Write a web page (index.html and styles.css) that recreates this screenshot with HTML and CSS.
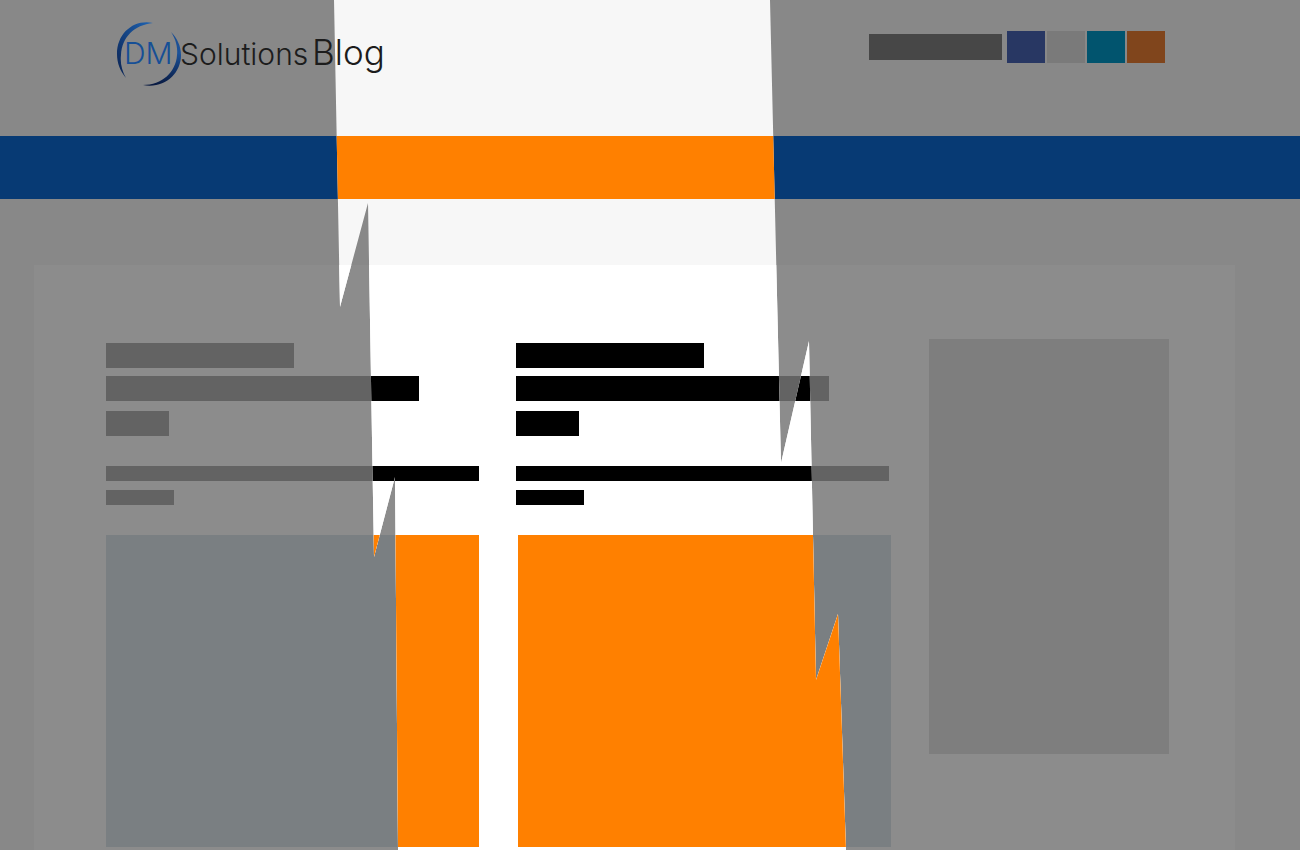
FILE: index.html
```html
<!DOCTYPE html>
<html lang="de">
<head>
	<meta charset="utf-8">
	<link rel="stylesheet" href="styles.css">
</head>
<body>
	<div class="stage">

		<!-- dimmed page -->
		<div class="page">
			<header class="header">
				<svg class="logo" width="290" height="68" viewBox="0 0 290 68">
					<defs>
						<linearGradient id="arcLeft" x1="1" y1="0" x2="0" y2="1">
							<stop offset="0" stop-color="#2065b4"></stop>
							<stop offset="1" stop-color="#09204f"></stop>
						</linearGradient>
						<linearGradient id="arcRight" x1="0" y1="0" x2="0" y2="1">
							<stop offset="0" stop-color="#1d4f92"></stop>
							<stop offset="0.4" stop-color="#1b5299"></stop>
							<stop offset="1" stop-color="#08183f"></stop>
						</linearGradient>
					</defs>
					<path fill="url(#arcLeft)" d="M41 3C22-1 5 13 5 34C5 43 8 51 14 58C10 51 8 43 9 35C10 17 22 5 41 3Z"></path>
					<path fill="url(#arcRight)" d="M59 12C65 18 69 26 69 35C69 54 52 69 31 65C50 65 64 52 65 35C66 26 63 18 59 12Z"></path>
					<text class="logo-dm" x="12" y="44">DM</text>
					<text class="logo-solutions" x="68" y="45">Solutions</text>
					<text class="logo-blog" x="200" y="45">Blog</text>
				</svg>
				<div class="share">
					<div class="share-label"></div>
					<div class="share-box facebook"></div>
					<div class="share-box mail"></div>
					<div class="share-box twitter"></div>
					<div class="share-box rss"></div>
				</div>
			</header>
			<div class="nav"></div>
			<div class="panel">
				<div class="main">
					<div class="teasers">
						<div class="teaser">
							<div class="title"></div>
							<div class="title long"></div>
							<div class="title short"></div>
							<div class="line"></div>
							<div class="line short"></div>
						</div>
						<div class="teaser">
							<div class="title"></div>
							<div class="title long"></div>
							<div class="title short"></div>
							<div class="line"></div>
							<div class="line short"></div>
						</div>
					</div>
					<div class="images">
						<div class="image"></div>
						<div class="image"></div>
					</div>
				</div>
				<div class="sidebar"></div>
			</div>
		</div>

		<!-- same page in full colour, only visible inside the jagged strip -->
		<div class="page lit">
			<div class="header"></div>
			<div class="nav"></div>
			<div class="panel">
				<div class="main">
					<div class="teasers">
						<div class="teaser">
							<div class="title"></div>
							<div class="title long"></div>
							<div class="title short"></div>
							<div class="line"></div>
							<div class="line short"></div>
						</div>
						<div class="teaser">
							<div class="title"></div>
							<div class="title long"></div>
							<div class="title short"></div>
							<div class="line"></div>
							<div class="line short"></div>
						</div>
					</div>
					<div class="images">
						<div class="image"></div>
						<div class="image"></div>
					</div>
				</div>
				<div class="sidebar"></div>
			</div>
		</div>

	</div>
</body>
</html>
```

FILE: styles.css
```css
* {
	box-sizing: border-box;
}
body {
	margin: 0;
	background: #888888;
	font-family: "Inter", "Liberation Sans", sans-serif;
}
.stage {
	position: relative;
}
.page {
	display: flex;
	flex-direction: column;
	min-height: 100vh;
	background: #888888;
}

/* header */
.header {
	display: flex;
	justify-content: space-between;
	align-items: flex-start;
	height: 136px;
	padding: 20px 135px 0 112px;
}
.logo {
	position: relative;
	z-index: 1;
}
.logo-dm {
	font-size: 30px;
	font-weight: 300;
	fill: #164f96;
}
.logo-solutions {
	font-size: 30px;
	font-weight: 300;
	fill: #1c1c1c;
}
.logo-blog {
	font-size: 35px;
	font-weight: 300;
	fill: #1c1c1c;
}
.share {
	display: flex;
	align-items: center;
	gap: 2px;
	margin-top: 11px;
}
.share-label {
	width: 133px;
	height: 26px;
	margin-right: 3px;
	background: #474747;
}
.share-box {
	width: 38px;
	height: 32px;
}
.facebook {
	background: #283763;
}
.mail {
	background: #7a7a7a;
}
.twitter {
	background: #01546e;
}
.rss {
	background: #80451c;
}

.nav {
	height: 63px;
	background: #073a74;
}

/* content */
.panel {
	display: flex;
	flex: 1;
	align-items: flex-start;
	gap: 40px;
	margin: 66px 65px 0 34px;
	padding: 74px 66px 3px 72px;
	background: #8c8c8c;
}
.main {
	flex: 1;
	padding-top: 4px;
}
.teasers {
	display: grid;
	grid-template-columns: 1fr 1fr;
	gap: 37px;
}
.title {
	width: 188px;
	height: 25px;
	background: #636363;
}
.title.long {
	width: 313px;
	max-width: 100%;
	margin-top: 8px;
}
.title.short {
	width: 63px;
	margin-top: 10px;
}
.line {
	height: 15px;
	margin-top: 30px;
	background: #636363;
}
.line.short {
	width: 68px;
	margin-top: 9px;
}
.images {
	display: grid;
	grid-template-columns: 1fr 1fr;
	gap: 39px;
	margin: 30px -2px 0 0;
}
.image {
	height: 312px;
	background: #7a7f82;
}
.sidebar {
	width: 240px;
	height: 415px;
	background: #7e7e7e;
}

/* full colour layer */
.lit {
	position: absolute;
	top: 0;
	left: 0;
	width: 100%;
	height: 100%;
	background: #f7f7f7;
	clip-path: polygon(334px 0, 340px 307px, 368px 203px, 374px 557px, 395px 477px, 398px 100%,
		846px 100%, 838px 614px, 816px 680px, 809px 341px, 781px 463px, 770px 0);
}
.lit .nav {
	background: #ff8000;
}
.lit .panel {
	background: #ffffff;
}
.lit .title,
.lit .line {
	background: #000000;
}
.lit .image {
	background: #ff8000;
}
```
